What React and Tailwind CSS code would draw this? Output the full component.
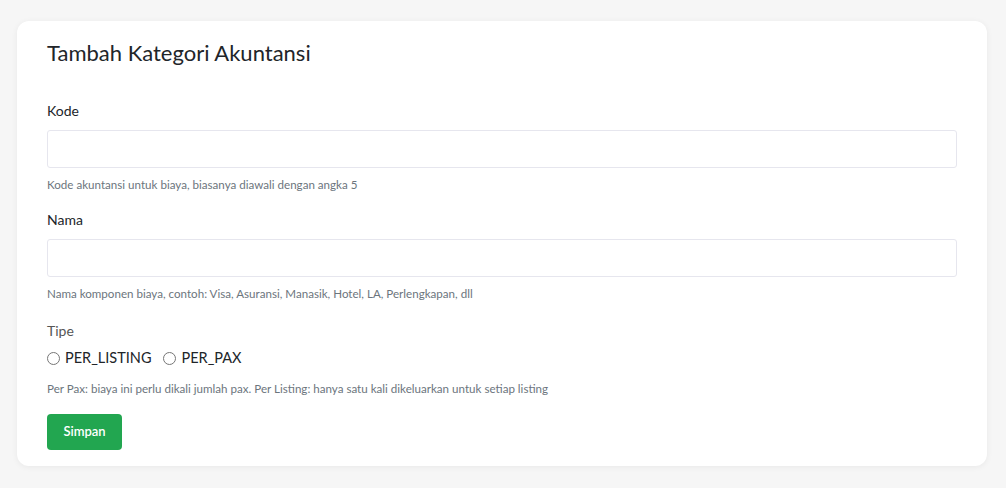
import React from 'react';

const Field = ({ label, help }) => (
  <div>
    <label className="block text-[14px] leading-5 text-[#212529] mb-[9px]">{label}</label>
    <input type="text" className="block w-full h-[38px] rounded-[3px] border border-[#e6e6ee] bg-white px-3 text-sm outline-none" />
    <p className="mt-[9px] text-[11.6px] leading-4 text-[#6c757d]">{help}</p>
  </div>
);

const App = () => {
  return (
    <div className="min-h-screen bg-[#f6f6f6] pl-[17px] pr-[19px] pt-[21px] pb-6" style={{ fontFamily: 'Lato, "Noto Sans", sans-serif' }}>
      <div className="rounded-xl bg-white px-[30px] pt-4 pb-4 shadow-[0_1px_6px_rgba(0,0,0,0.06)]">
        <h3 className="text-[22px] leading-8 text-[#212529]">Tambah Kategori Akuntansi</h3>

        <div className="mt-8">
          <Field label="Kode" help="Kode akuntansi untuk biaya, biasanya diawali dengan angka 5" />
        </div>

        <div className="mt-[17px]">
          <Field label="Nama" help="Nama komponen biaya, contoh: Visa, Asuransi, Manasik, Hotel, LA, Perlengkapan, dll" />
        </div>

        <div className="mt-[19px]">
          <div className="text-[14px] leading-5 text-[#555]">Tipe</div>
          <div className="mt-[7px] flex items-center gap-3 text-[14.5px] leading-5 text-[#212529]">
            <label className="flex items-center gap-[5px]">
              <input type="radio" name="tipe" className="m-0 h-[13px] w-[13px]" />
              PER_LISTING
            </label>
            <label className="flex items-center gap-[5px]">
              <input type="radio" name="tipe" className="m-0 h-[13px] w-[13px]" />
              PER_PAX
            </label>
          </div>
          <p className="mt-[13px] text-[11.6px] leading-4 text-[#6c757d]">
            Per Pax: biaya ini perlu dikali jumlah pax. Per Listing: hanya satu kali dikeluarkan untuk setiap listing
          </p>
        </div>

        <button className="mt-[17px] h-9 w-[75px] rounded-[4px] bg-[#22a650] text-[13px] font-semibold text-white">
          Simpan
        </button>
      </div>
    </div>
  );
};

export default App;
